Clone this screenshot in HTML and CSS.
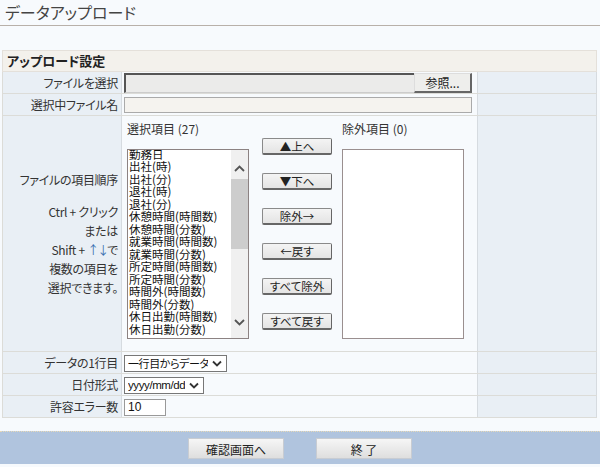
FILE: index.html
```html
<!DOCTYPE html>
<html>

<head>
  <title>データアップロード</title>
  <meta charset="utf-8">
  <link rel="stylesheet" href="styles.css">
</head>

<body>
  <h1 class="page-title">データアップロード</h1>

  <table class="form">
    <colgroup>
      <col class="col-label">
      <col class="col-value">
      <col class="col-side">
    </colgroup>
    <tr class="section-row">
      <th colspan="3">アップロード設定</th>
    </tr>
    <tr class="row">
      <td class="label">ファイルを選択</td>
      <td class="value">
        <div class="file-row">
          <span class="file-path"></span>
          <span class="browse">参照...</span>
        </div>
      </td>
      <td class="side"></td>
    </tr>
    <tr class="row">
      <td class="label">選択中ファイル名</td>
      <td class="value"><span class="file-name"></span></td>
      <td class="side"></td>
    </tr>
    <tr class="order-row">
      <td class="label help">
        <p class="help-head">ファイルの項目順序</p>
        <p>Ctrl + クリック</p>
        <p>または</p>
        <p>Shift + <span class="keys">↑↓</span>で</p>
        <p>複数の項目を</p>
        <p>選択できます。</p>
      </td>
      <td class="value">
        <div class="order">
          <div class="pane">
            <div class="pane-title">選択項目 (27)</div>
            <div class="listbox">
              <ul class="items">
                <li>勤務日</li>
                <li>出社(時)</li>
                <li>出社(分)</li>
                <li>退社(時)</li>
                <li>退社(分)</li>
                <li>休憩時間(時間数)</li>
                <li>休憩時間(分数)</li>
                <li>就業時間(時間数)</li>
                <li>就業時間(分数)</li>
                <li>所定時間(時間数)</li>
                <li>所定時間(分数)</li>
                <li>時間外(時間数)</li>
                <li>時間外(分数)</li>
                <li>休日出勤(時間数)</li>
                <li>休日出勤(分数)</li>
              </ul>
              <div class="scrollbar">
                <span class="arrow arrow-up">
                  <svg width="11" height="7" viewBox="0 0 11 7"><path d="M1 6 L5.5 1.5 L10 6" fill="none" stroke="#555" stroke-width="1.8"/></svg>
                </span>
                <span class="thumb"></span>
                <span class="track"></span>
                <span class="arrow arrow-down">
                  <svg width="11" height="7" viewBox="0 0 11 7"><path d="M1 1 L5.5 5.5 L10 1" fill="none" stroke="#555" stroke-width="1.8"/></svg>
                </span>
              </div>
            </div>
          </div>
          <div class="moves">
            <span class="btn">▲上へ</span>
            <span class="btn">▼下へ</span>
            <span class="btn">除外→</span>
            <span class="btn">←戻す</span>
            <span class="btn">すべて除外</span>
            <span class="btn">すべて戻す</span>
          </div>
          <div class="pane">
            <div class="pane-title">除外項目 (0)</div>
            <div class="listbox empty"></div>
          </div>
        </div>
      </td>
      <td class="side"></td>
    </tr>
    <tr class="row">
      <td class="label">データの1行目</td>
      <td class="value">
        <span class="select first-line"><span class="sel-text">一行目からデータ</span><svg class="chev" width="10" height="7" viewBox="0 0 10 7"><path d="M1 1.5 L5 5.5 L9 1.5" fill="none" stroke="#333" stroke-width="1.8"/></svg></span>
      </td>
      <td class="side"></td>
    </tr>
    <tr class="row">
      <td class="label">日付形式</td>
      <td class="value">
        <span class="select date-format"><span class="sel-text">yyyy/mm/dd</span><svg class="chev" width="10" height="7" viewBox="0 0 10 7"><path d="M1 1.5 L5 5.5 L9 1.5" fill="none" stroke="#333" stroke-width="1.8"/></svg></span>
      </td>
      <td class="side"></td>
    </tr>
    <tr class="row">
      <td class="label">許容エラー数</td>
      <td class="value"><span class="num-input">10</span></td>
      <td class="side"></td>
    </tr>
  </table>

  <div class="footer">
    <span class="foot-btn">確認画面へ</span>
    <span class="foot-btn">終 了</span>
  </div>
</body>

</html>
```

FILE: styles.css
```css
* {
  margin: 0;
  padding: 0;
  box-sizing: border-box;
}

li {
  list-style: none;
}

body {
  background: #f7fafd;
  color: #333;
  font-family: "Noto Sans CJK JP", "Liberation Sans", sans-serif;
  font-size: 12px;
  line-height: 16px;
  font-feature-settings: "palt";
}

.page-title {
  height: 26px;
  padding-left: 5px;
  font-size: 16px;
  font-weight: normal;
  line-height: 24px;
  color: #444;
  border-bottom: 1px solid #b8b0a9;
}

.form {
  width: 594px;
  margin: 24px 0 0 2px;
  border-collapse: collapse;
  table-layout: fixed;
  font-size: 12px;
}

.col-label {
  width: 119px;
}

.col-value {
  width: 356px;
}

.col-side {
  width: 119px;
}

.section-row th {
  height: 21px;
  padding-left: 4px;
  text-align: left;
  font-size: 13px;
  font-weight: bold;
  color: #222;
  background: #f3f1ec;
  border: 1px solid #e4e0da;
}

.row td {
  height: 22px;
}

.form td {
  border-top: 1px solid #dcdcd8;
  border-bottom: 1px solid #dcdcd8;
  white-space: nowrap;
}

.label {
  padding-right: 3px;
  text-align: right;
  background: #e9eff5;
  border-left: 1px solid #dcdcd8;
  border-right: 1px solid #d6dbe0;
  letter-spacing: -0.3px;
}

.value {
  padding-left: 2px;
  background: #f7fafd;
}

.side {
  background: #e9eff5;
  border-left: 1px solid #d6dbe0;
  border-right: 1px solid #d6dbe0;
}

/* ファイル選択 */
.file-row {
  display: flex;
  height: 20px;
  width: 348px;
}

.file-path {
  flex: 1;
  background: #ebebea;
  border-top: 2px solid #555;
  border-left: 2px solid #555;
  border-bottom: 1px solid #ccc;
}

.browse {
  width: 58px;
  text-align: center;
  line-height: 17px;
  background: #eeeeec;
  border: 1px solid #ddd;
  border-right: 2px solid #666;
  border-bottom: 2px solid #666;
  color: #222;
}

.file-name {
  display: block;
  width: 348px;
  height: 16px;
  background: #f5f3ef;
  border: 1px solid #aaa;
}

/* 項目順序 */
.order-row td {
  height: 236px;
}

.help p {
  line-height: 19px;
}

.help .help-head {
  margin-bottom: 13px;
}

.keys {
  color: #3a6fb0;
  letter-spacing: -2px;
}

.order {
  display: flex;
  padding: 4px 0 0 3px;
  height: 234px;
}

.pane {
  display: flex;
  flex-direction: column;
  width: 122px;
}

.pane-title {
  height: 28px;
  line-height: 16px;
}

.listbox {
  display: flex;
  height: 190px;
  background: #fff;
  border: 1px solid #8c8282;
  overflow: hidden;
}

.items {
  flex: 1;
  margin-top: -2px;
  padding-left: 1px;
  color: #111;
  font-size: 11.5px;
  line-height: 12.5px;
  overflow: hidden;
}

.items li {
  height: 12.5px;
}

.scrollbar {
  display: flex;
  flex-direction: column;
  width: 17px;
  flex-shrink: 0;
  background: #f0f0f0;
}

.arrow {
  display: flex;
  justify-content: center;
  align-items: center;
}

.arrow-up {
  height: 29px;
  padding-top: 8px;
}

.thumb {
  height: 70px;
  background: #cdcdcd;
}

.track {
  flex: 1;
}

.arrow-down {
  height: 26px;
  padding-bottom: 4px;
}

.moves {
  display: flex;
  flex-direction: column;
  gap: 18px;
  width: 70px;
  margin: 17px 10px 0 13px;
}

.btn {
  height: 17px;
  text-align: center;
  line-height: 15px;
  font-size: 11.5px;
  color: #222;
  white-space: nowrap;
  background: linear-gradient(#f4f4f4, #e4e4e4);
  border: 1px solid #8a8a8a;
  border-right-color: #666;
  border-bottom: 2px solid #666;
  border-radius: 2px;
}

.listbox.empty {
  border-color: #9a8f8f;
}

/* 下段の入力 */
.select {
  display: inline-flex;
  align-items: center;
  justify-content: space-between;
  height: 17px;
  padding: 0 4px 0 3px;
  background: #fff;
  border: 1px solid #777;
  line-height: 15px;
  color: #111;
  vertical-align: middle;
  overflow: hidden;
}

.sel-text {
  overflow: hidden;
  white-space: nowrap;
}

.chev {
  flex-shrink: 0;
  margin-left: 4px;
}

.first-line {
  width: 103px;
  font-size: 11px;
}

.first-line .sel-text {
  letter-spacing: -0.4px;
}

.date-format {
  width: 80px;
  font-family: "Liberation Sans", sans-serif;
  font-size: 11.5px;
  letter-spacing: -0.4px;
}

.num-input {
  display: inline-block;
  width: 42px;
  height: 17px;
  padding-left: 3px;
  background: #fff;
  border: 1px solid #999;
  font-family: "Liberation Sans", sans-serif;
  font-size: 12px;
  line-height: 15px;
  color: #111;
  vertical-align: middle;
}

.footer {
  display: flex;
  justify-content: center;
  align-items: center;
  gap: 32px;
  height: 33px;
  margin-top: 13px;
  background: #b0c4de;
  border-top: 1px dotted #e8d9b6;
}

.foot-btn {
  width: 96px;
  height: 21px;
  text-align: center;
  line-height: 21px;
  font-size: 12px;
  color: #222;
  background: linear-gradient(#f6f6f6, #dedede);
  border: 1px solid #c8ccd2;
}
```
